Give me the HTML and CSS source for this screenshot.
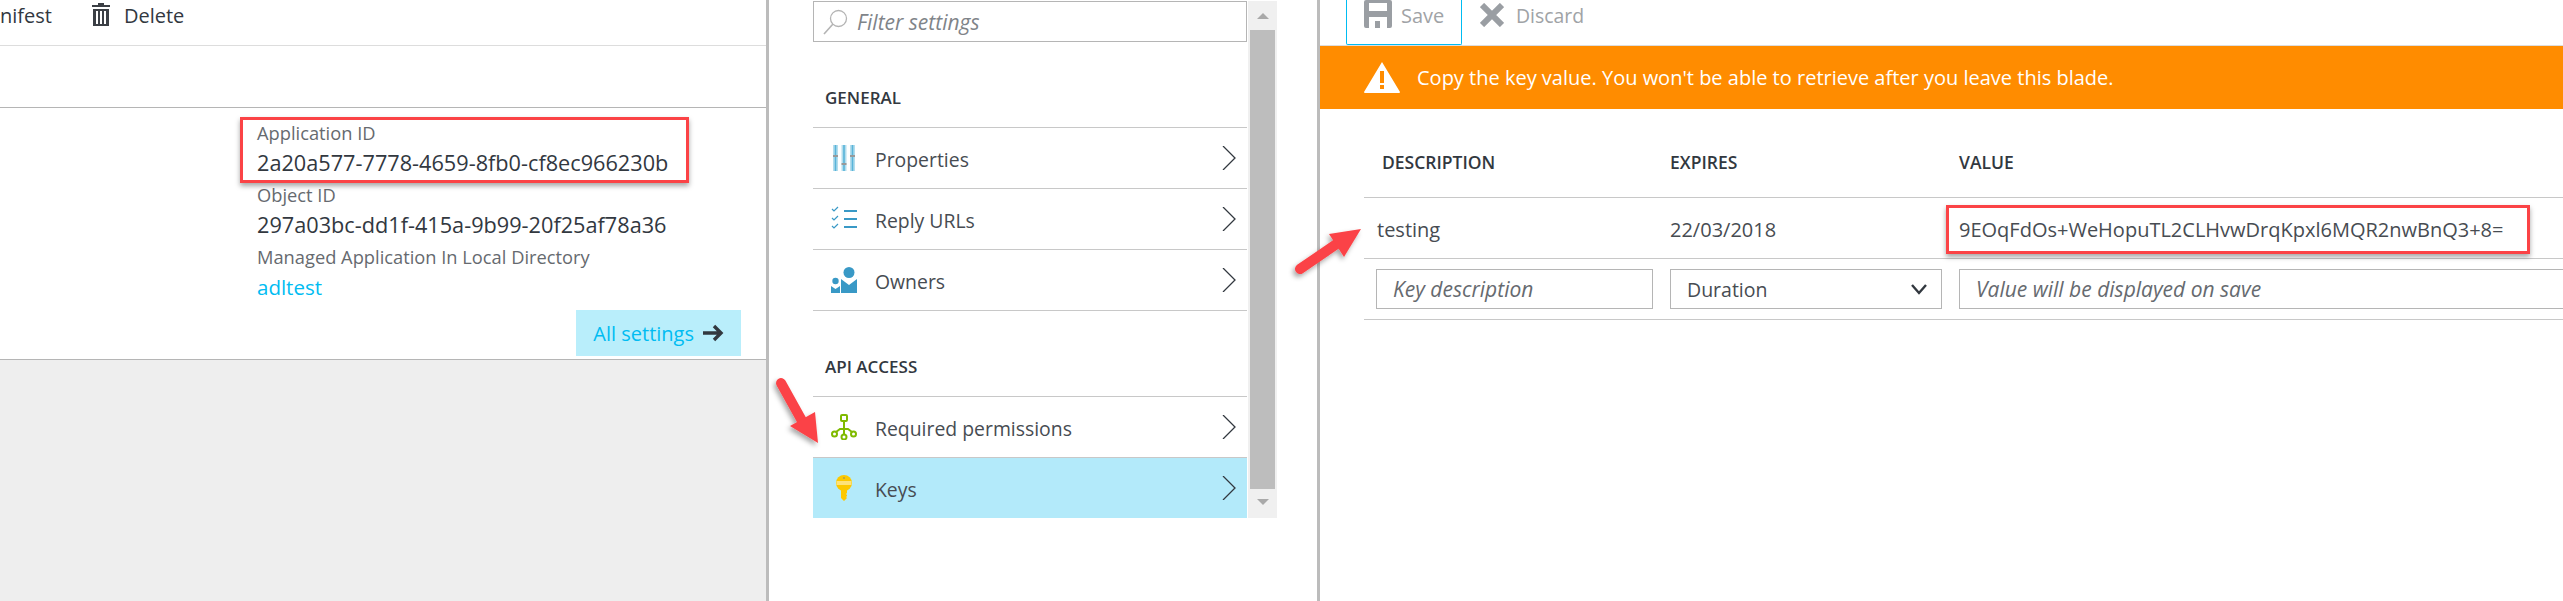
FILE: index.html
```html
<!DOCTYPE html>
<html lang="en">
<head>
    <meta charset="UTF-8">
    <title>App registration keys</title>
    <link rel="stylesheet" href="styles.css">
</head>
<body>
    <section class="app-blade">
        <div class="toolbar">
            <span class="toolbar-item">nifest</span>
            <svg class="trash-icon" width="18" height="23" viewBox="0 0 18 23">
                <path d="M6 0h6v2h6v2H0V2h6zM1 6h16v17H1zM4 8v13h2V8zm4 0v13h2V8zm4 0v13h2V8z" fill="#3b3f45" fill-rule="evenodd"/>
            </svg>
            <span class="toolbar-item">Delete</span>
        </div>
        <div class="spacer-row"></div>
        <div class="essentials">
            <div class="label first">Application ID</div>
            <div class="value">2a20a577-7778-4659-8fb0-cf8ec966230b</div>
            <div class="label">Object ID</div>
            <div class="value">297a03bc-dd1f-415a-9b99-20f25af78a36</div>
            <div class="label">Managed Application In Local Directory</div>
            <div class="value link">adltest</div>
            <div class="settings-row">
                <div class="all-settings">
                    <span>All settings</span>
                    <svg width="21" height="18" viewBox="0 0 21 18">
                        <path d="M0 9h18M11 2l7 7-7 7" fill="none" stroke="#32383f" stroke-width="3.4"/>
                    </svg>
                </div>
            </div>
        </div>
        <div class="empty-area"></div>
    </section>

    <section class="menu-blade">
        <div class="menu-list">
            <div class="filter">
                <svg width="25" height="26" viewBox="0 0 25 26">
                    <circle cx="15.5" cy="9.5" r="8" fill="none" stroke="#b4b4b4" stroke-width="1.3"/>
                    <path d="M10 15L1 25" stroke="#b4b4b4" stroke-width="1.6"/>
                </svg>
                <span>Filter settings</span>
            </div>
            <div class="menu-title">GENERAL</div>
            <div class="menu-row">
                <svg class="menu-icon" width="26" height="26" viewBox="0 0 26 26">
                    <path d="M2 0h5v26H2zM10.500 0h5v26h-5zM19 0h5v26h-5z" fill="#b3dded"/>
                    <path d="M4.500 0v26M13 0v26M21.500 0v26" stroke="#59b4d9" stroke-width="1.600"/>
                    <path d="M2 10h5v2H2zM10.500 18h5v2h-5zM19 10h5v2h-5z" fill="#999"/>
                </svg>
                <span class="menu-text">Properties</span>
                <svg class="chevron" width="14" height="24" viewBox="0 0 14 24"><path d="M1 0l12 12L1 24" fill="none" stroke="#32383f" stroke-width="1.300"/></svg>
            </div>
            <div class="menu-row">
                <svg class="menu-icon" width="26" height="26" viewBox="0 0 26 26">
                    <path d="M13 5h13M13 13h13M13 21h13" stroke="#3999c6" stroke-width="2"/>
                    <path d="M1 3l2 2 4-4M1 12l2 2 4-4M1 20l2 2 4-4" fill="none" stroke="#3999c6" stroke-width="1.200"/>
                </svg>
                <span class="menu-text">Reply URLs</span>
                <svg class="chevron" width="14" height="24" viewBox="0 0 14 24"><path d="M1 0l12 12L1 24" fill="none" stroke="#32383f" stroke-width="1.300"/></svg>
            </div>
            <div class="menu-row">
                <svg class="menu-icon" width="26" height="26" viewBox="0 0 26 26">
                    <circle cx="18" cy="5.500" r="5.500" fill="#3999c6"/>
                    <circle cx="4.500" cy="14" r="3.200" fill="#3999c6"/>
                    <path d="M10 12l8 6 8-6v14H10zM0 19l4.500 3L9 19v7H0z" fill="#3999c6"/>
                </svg>
                <span class="menu-text">Owners</span>
                <svg class="chevron" width="14" height="24" viewBox="0 0 14 24"><path d="M1 0l12 12L1 24" fill="none" stroke="#32383f" stroke-width="1.300"/></svg>
            </div>
            <div class="menu-title closed">API ACCESS</div>
            <div class="menu-row">
                <svg class="menu-icon" width="26" height="26" viewBox="0 0 26 26">
                    <g fill="none" stroke="#7fba00" stroke-width="2">
                        <rect x="10" y="1" width="6" height="6" rx="1"/>
                        <circle cx="3.500" cy="20" r="2.500"/>
                        <circle cx="13" cy="23" r="2.500"/>
                        <circle cx="22.500" cy="20" r="2.500"/>
                        <path d="M13 7v13M5 18l4-3h8l4 3"/>
                    </g>
                </svg>
                <span class="menu-text">Required permissions</span>
                <svg class="chevron" width="14" height="24" viewBox="0 0 14 24"><path d="M1 0l12 12L1 24" fill="none" stroke="#32383f" stroke-width="1.300"/></svg>
            </div>
            <div class="menu-row active">
                <svg class="menu-icon" width="26" height="26" viewBox="0 0 26 26">
                    <circle cx="13" cy="8" r="8" fill="#fcc800"/>
                    <path d="M10 14h6v4l-1 1 1 1v1l-1 1 1 1-3 3-3-3z" fill="#fcc800"/>
                    <path d="M5.500 6h15v4h-15z" fill="#fde27a"/>
                    <circle cx="13" cy="3" r="1.100" fill="#b3a24a"/>
                </svg>
                <span class="menu-text">Keys</span>
                <svg class="chevron" width="14" height="24" viewBox="0 0 14 24"><path d="M1 0l12 12L1 24" fill="none" stroke="#32383f" stroke-width="1.300"/></svg>
            </div>
        </div>
        <div class="scrollbar">
            <div class="scroll-up"></div>
            <div class="scroll-thumb"></div>
            <div class="scroll-down"></div>
        </div>
    </section>

    <section class="keys-blade">
        <div class="key-toolbar">
            <div class="save-btn">
                <svg width="28" height="28" viewBox="0 0 28 28">
                    <path d="M2 0h24a2 2 0 0 1 2 2v24a2 2 0 0 1-2 2H2a2 2 0 0 1-2-2V2a2 2 0 0 1 2-2zM5 3v8h18V3zM5 17v11h18V17zM11 21h5v7h-5z" fill="#9a9ea3" fill-rule="evenodd"/>
                </svg>
                <span>Save</span>
            </div>
            <div class="discard-btn">
                <svg width="24" height="24" viewBox="0 0 24 24"><path d="M2 2l20 20M22 2L2 22" stroke="#9a9ea3" stroke-width="6"/></svg>
                <span>Discard</span>
            </div>
        </div>
        <div class="banner">
            <svg width="36" height="31" viewBox="0 0 36 31">
                <path d="M18 0l18 30a1 1 0 0 1-1 1H1a1 1 0 0 1-1-1zM16 9v12h4V9zM16 23v4h4v-4z" fill="#fff" fill-rule="evenodd"/>
            </svg>
            <span>Copy the key value. You won't be able to retrieve after you leave this blade.</span>
        </div>
        <div class="key-table">
            <div class="key-row head">
                <div class="cell desc-head">DESCRIPTION</div>
                <div class="cell">EXPIRES</div>
                <div class="cell">VALUE</div>
            </div>
            <div class="key-row data">
                <div class="cell desc-data">testing</div>
                <div class="cell">22/03/2018</div>
                <div class="cell">9EOqFdOs+WeHopuTL2CLHvwDrqKpxl6MQR2nwBnQ3+8=</div>
            </div>
            <div class="key-row new">
                <div class="field desc-field">Key description</div>
                <div class="field select-field">
                    <span>Duration</span>
                    <svg width="16" height="11" viewBox="0 0 16 11"><path d="M1 1l7 8 7-8" fill="none" stroke="#32383f" stroke-width="2.400"/></svg>
                </div>
                <div class="field value-field">Value will be displayed on save</div>
            </div>
        </div>
    </section>

    <!-- annotations drawn over the screenshot -->
    <div class="callout callout-app"></div>
    <div class="callout callout-value"></div>
    <svg class="arrows" width="2563" height="601" viewBox="0 0 2563 601">
        <defs>
            <filter id="arrow-shadow" x="-30%" y="-30%" width="160%" height="160%">
                <feDropShadow dx="-2" dy="3" stdDeviation="2.500" flood-color="#000" flood-opacity="0.350"/>
            </filter>
        </defs>
        <g fill="#fb4346" filter="url(#arrow-shadow)">
            <path d="M781 383L806 428" stroke="#fb4346" stroke-width="10" stroke-linecap="round"/>
            <path d="M818 443L815 412L790 426z"/>
            <path d="M1300 269L1338 243" stroke="#fb4346" stroke-width="10" stroke-linecap="round"/>
            <path d="M1361 229L1329 234L1344 257z"/>
        </g>
    </svg>
</body>
</html>
```

FILE: styles.css
```css
html, body {
    margin: 0;
    padding: 0;
}

body {
    position: relative;
    display: flex;
    width: 2563px;
    height: 601px;
    overflow: hidden;
    background-color: #fff;
    color: #32383f;
    font-family: 'Open Sans', 'Noto Sans', sans-serif;
    font-size: 20px;
}

/* left blade */
.app-blade {
    display: flex;
    flex-direction: column;
    width: 766px;
    flex: none;
    border-right: 3px solid #bcbcbc;
}

.toolbar {
    display: flex;
    align-items: flex-start;
    height: 45px;
    flex: none;
    border-bottom: 1px solid #ddd;
}

.toolbar-item {
    font-size: 20px;
    line-height: 32px;
}

.trash-icon {
    margin: 3px 14px 0 40px;
}

.spacer-row {
    height: 61px;
    flex: none;
    border-bottom: 1px solid #b5b5b5;
}

.essentials {
    height: 252px;
    flex: none;
    box-sizing: border-box;
    padding-left: 257px;
    border-bottom: 1px solid #b5b5b5;
}

.label {
    height: 30px;
    line-height: 30px;
    margin-top: 2px;
    color: #666a6f;
    font-size: 18.3px;
}

.label.first {
    margin-top: 10px;
}

.value {
    height: 30px;
    line-height: 30px;
    font-size: 21.7px;
}

.value.link {
    color: #00bcf2;
    font-size: 20.5px;
}

.settings-row {
    display: flex;
    justify-content: flex-end;
    margin-top: 8px;
    padding-right: 25px;
}

.all-settings {
    display: flex;
    align-items: center;
    gap: 9px;
    height: 46px;
    padding: 0 17px;
    background-color: #b9eefb;
    color: #00bcf2;
    font-size: 20px;
}

.empty-area {
    flex: 1;
    background-color: #eee;
}

/* settings menu blade */
.menu-blade {
    display: flex;
    align-items: flex-start;
    width: 551px;
    flex: none;
    box-sizing: border-box;
    padding: 1px 0 0 44px;
    border-right: 3px solid #bcbcbc;
}

.menu-list {
    width: 434px;
    flex: none;
}

.filter {
    display: flex;
    align-items: center;
    gap: 9px;
    height: 41px;
    box-sizing: border-box;
    padding-left: 9px;
    border: 1px solid #b5b5b5;
    color: #7f8489;
    font-size: 21px;
    font-style: italic;
}

.menu-title {
    display: flex;
    align-items: flex-end;
    height: 85px;
    box-sizing: border-box;
    padding: 0 0 17px 12px;
    font-size: 17px;
    font-weight: 600;
    line-height: 24px;
}

.menu-title.closed {
    border-top: 1px solid #c8c8c8;
    height: 86px;
}

.menu-row {
    display: flex;
    align-items: center;
    height: 61px;
    box-sizing: border-box;
    padding: 0 11px 0 18px;
    border-top: 1px solid #c8c8c8;
}

.menu-row.active {
    background-color: #b3eafa;
}

.menu-icon {
    flex: none;
    margin-right: 18px;
}

.menu-text {
    flex: 1;
    padding-top: 2px;
    font-size: 19.4px;
    color: #474c52;
}

.scrollbar {
    display: flex;
    flex-direction: column;
    align-items: center;
    width: 29px;
    height: 517px;
    flex: none;
    margin-left: 1px;
    background-color: #f0f0f0;
}

.scroll-up,
.scroll-down {
    width: 0;
    height: 0;
    border-left: 6px solid transparent;
    border-right: 6px solid transparent;
}

.scroll-up {
    margin: 12px 0 11px;
    border-bottom: 6px solid #a9a9a9;
}

.scroll-thumb {
    width: 25px;
    height: 459px;
    flex: none;
    background-color: #bdbdbd;
}

.scroll-down {
    margin-top: 10px;
    border-top: 6px solid #a9a9a9;
}

/* keys blade */
.keys-blade {
    flex: 1;
    min-width: 0;
}

.key-toolbar {
    display: flex;
    align-items: flex-start;
    height: 45px;
    border-bottom: 1px solid #ddd;
    padding-left: 26px;
    color: #a0a3a6;
    font-size: 20px;
}

.save-btn {
    display: flex;
    gap: 9px;
    width: 116px;
    height: 45px;
    flex: none;
    box-sizing: border-box;
    padding-left: 17px;
    border: 1px solid #00bcf2;
    border-top: 0;
    border-radius: 0 0 2px 2px;
}

.save-btn span {
    line-height: 32px;
}

.discard-btn {
    display: flex;
    gap: 12px;
    margin-left: 18px;
    font-size: 19.4px;
}

.discard-btn span {
    line-height: 32px;
}

.discard-btn svg {
    margin-top: 3px;
}

.banner {
    display: flex;
    align-items: center;
    gap: 17px;
    height: 63px;
    padding-left: 44px;
    background-color: #ff8c00;
    color: #fff;
    font-size: 20px;
}

.key-table {
    margin-left: 44px;
}

.key-row {
    display: grid;
    grid-template-columns: 306px 289px 1fr;
    border-bottom: 1px solid #c8c8c8;
    align-items: center;
}

.key-row.head {
    height: 89px;
    box-sizing: border-box;
    padding-top: 18px;
    font-size: 17.5px;
    font-weight: 600;
}

.key-row.data {
    height: 61px;
    box-sizing: border-box;
    padding-top: 3px;
    font-size: 20px;
    color: #474c52;
}

.key-row.new {
    height: 61px;
    box-sizing: border-box;
    font-size: 21px;
}

.desc-head {
    padding-left: 18px;
}

.desc-data {
    padding-left: 13px;
}

.field {
    display: flex;
    align-items: center;
    height: 40px;
    box-sizing: border-box;
    border: 1px solid #b5b5b5;
    padding-left: 16px;
    font-style: italic;
    color: #666a6f;
}

.desc-field {
    width: 277px;
    margin-left: 12px;
}

.select-field {
    justify-content: space-between;
    width: 272px;
    padding-right: 14px;
    font-size: 19.5px;
    font-style: normal;
    color: #474c52;
}

.value-field {
    margin-right: -4px;
}

/* red annotation boxes */
.callout {
    position: absolute;
    box-sizing: border-box;
    border: 3px solid #fb4346;
    box-shadow: 0 3px 5px rgba(0, 0, 0, 0.35);
}

.callout-app {
    left: 240px;
    top: 117px;
    width: 449px;
    height: 66px;
}

.callout-value {
    left: 1946px;
    top: 205px;
    width: 584px;
    height: 49px;
}

.arrows {
    position: absolute;
    left: 0;
    top: 0;
    pointer-events: none;
}
```
